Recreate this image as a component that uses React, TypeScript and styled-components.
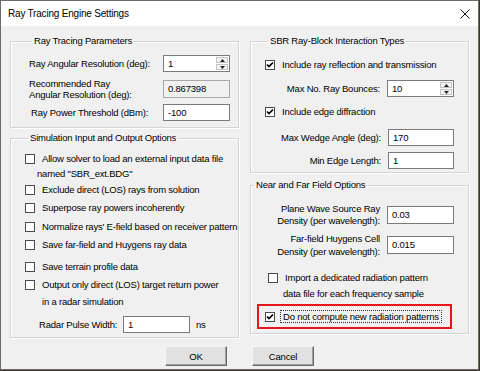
import React from 'react';
import styled, { createGlobalStyle } from 'styled-components';

const GlobalStyle = createGlobalStyle`
  html, body { margin: 0; padding: 0; background: #3c3a2c; }
  * { box-sizing: border-box; }
`;

const Window = styled.div`
  width: 479px;
  height: 370px;
  border: 1px solid #6b6b6b;
  background: #f0f0f0;
  display: flex;
  flex-direction: column;
  font-family: "Liberation Sans", Arial, sans-serif;
  font-size: 9.5px;
  letter-spacing: -0.2px;
  color: #000;
`;

const TitleBar = styled.div`
  height: 25px;
  flex: none;
  background: #fff;
  display: flex;
  align-items: center;
  justify-content: space-between;
  padding: 0 8px 0 7px;
  font-size: 10px;
  letter-spacing: -0.2px;
  color: #000;
`;

const Columns = styled.div`
  display: grid;
  grid-template-columns: 229px 219px;
  column-gap: 11px;
  padding: 9px 0 0 9px;
  align-items: start;
`;

const Column = styled.div<{ $gap: number }>`
  display: flex;
  flex-direction: column;
  gap: ${p => p.$gap}px;
`;

const Group = styled.fieldset<{ $h: number; $pl: number; $pr: number }>`
  margin: 0;
  min-width: 0;
  height: ${p => p.$h}px;
  border: 1px solid #d3d3d3;
  box-shadow: inset 1px 1px 0 #fff, 1px 1px 0 #fff;
  padding: 0 ${p => p.$pr}px 0 ${p => p.$pl}px;
  display: flex;
  flex-direction: column;
`;

const Legend = styled.legend`
  margin-left: 3px;
  padding: 0 2px;
  line-height: 12px;
`;

const FieldRow = styled.div<{ $mt: number; $h?: number; $align?: 'left' | 'right' }>`
  margin-top: ${p => p.$mt}px;
  height: ${p => p.$h ?? 17}px;
  display: flex;
  align-items: center;
  justify-content: ${p => (p.$align === 'left' ? 'space-between' : 'flex-end')};
  gap: 7px;
`;

const FieldLabel = styled.div<{ $indent?: number; $right?: boolean; $lh?: number }>`
  padding-left: ${p => p.$indent ?? 0}px;
  text-align: ${p => (p.$right ? 'right' : 'left')};
  line-height: ${p => p.$lh ?? 12}px;
  white-space: nowrap;
`;

const TextBox = styled.div<{ $w: number; $h?: number; $readonly?: boolean }>`
  flex: none;
  width: ${p => p.$w}px;
  height: ${p => p.$h ?? 17}px;
  border: 1px solid ${p => (p.$readonly ? '#a8a8a8' : '#7a7a7a')};
  background: ${p => (p.$readonly ? '#f0f0f0' : '#fff')};
  display: flex;
  align-items: center;
  justify-content: space-between;
  padding: 0 1px 0 4px;
  line-height: 12px;
`;

const Spinner = styled.div`
  width: 12px;
  height: 13px;
  display: flex;
  flex-direction: column;
  gap: 1px;
`;

const SpinButton = styled.div`
  flex: 1;
  background: #f4f4f4;
  border: 1px solid #c4c4c4;
  display: flex;
  align-items: center;
  justify-content: center;
`;

const CheckRow = styled.div<{ $mt: number; $lh?: number; $pl?: number }>`
  margin-top: ${p => p.$mt}px;
  padding-left: ${p => p.$pl ?? 0}px;
  display: flex;
  align-items: flex-start;
  gap: 7px;
  line-height: ${p => p.$lh ?? 15}px;
`;

const Box = styled.div<{ $lh: number }>`
  flex: none;
  width: 10px;
  height: 10px;
  margin-top: ${p => (p.$lh - 10) / 2}px;
  border: 1px solid #4a4a4a;
  background: #fff;
  display: flex;
  align-items: center;
  justify-content: center;
`;

const CheckText = styled.div`
  display: flex;
  flex-direction: column;
  white-space: nowrap;
`;

const Line = styled.span<{ $shift?: number }>`
  margin-left: ${p => p.$shift ?? 0}px;
`;

const Highlight = styled.div`
  margin: 2px 2px 0 6px;
  height: 25px;
  border: 2px solid #e8141c;
  display: flex;
  align-items: center;
  padding-left: 6px;
  gap: 6px;
`;

const FocusText = styled.span`
  outline: 1px dotted #333;
  padding: 0 2px;
  line-height: 11px;
  white-space: nowrap;
`;

const PulseRow = styled.div`
  margin-top: 6px;
  padding-left: 14px;
  height: 17px;
  display: flex;
  align-items: center;
  white-space: nowrap;
`;

const PulseLabel = styled.span`
  width: 84px;
`;

const Unit = styled.span`
  margin-left: 6px;
`;

const Footer = styled.div`
  margin-top: 8px;
  display: flex;
  justify-content: center;
  gap: 25px;
`;

const Button = styled.div`
  width: 62px;
  height: 20px;
  background: #e1e1e1;
  border: 1px solid;
  border-color: #f6f6f6 #6a6a6a #6a6a6a #f6f6f6;
  box-shadow: inset -1px -1px 0 #a0a0a0;
  display: flex;
  align-items: center;
  justify-content: center;
`;

const CheckMark = () => (
  <svg width="8" height="8" viewBox="0 0 8 8">
    <path d="M1 3.5 L3 5.5 L7 1.5" stroke="#000" strokeWidth="1.7" fill="none" />
  </svg>
);

const Arrow = ({ up }: { up?: boolean }) => (
  <svg width="5" height="3" viewBox="0 0 5 3">
    <path d={up ? 'M0 3 L2.5 0 L5 3 Z' : 'M0 0 L2.5 3 L5 0 Z'} fill="#222" />
  </svg>
);

const SpinBox = () => (
  <Spinner>
    <SpinButton><Arrow up /></SpinButton>
    <SpinButton><Arrow /></SpinButton>
  </Spinner>
);

const Check = ({ checked, lh }: { checked?: boolean; lh: number }) => (
  <Box $lh={lh}>{checked && <CheckMark />}</Box>
);

export default function App() {
  return (
    <>
      <GlobalStyle />
      <Window>
        <TitleBar>
          <span>Ray Tracing Engine Settings</span>
          <svg width="10" height="10" viewBox="0 0 10 10">
            <path d="M0.5 0.5 L9.5 9.5 M9.5 0.5 L0.5 9.5" stroke="#111" strokeWidth="1" />
          </svg>
        </TitleBar>
        <Columns>
          <Column $gap={4}>
            <Group $h={93} $pl={18} $pr={8}>
              <Legend>Ray Tracing Parameters</Legend>
              <FieldRow $mt={8} $align="left">
                <FieldLabel>Ray Angular Resolution (deg):</FieldLabel>
                <TextBox $w={67}>1<SpinBox /></TextBox>
              </FieldRow>
              <FieldRow $mt={6} $h={22} $align="left">
                <FieldLabel $lh={11}>Recommended Ray<br />Angular Resolution (deg):</FieldLabel>
                <TextBox $w={67} $h={18} $readonly>0.867398</TextBox>
              </FieldRow>
              <FieldRow $mt={4} $align="left">
                <FieldLabel $indent={2}>Ray Power Threshold (dBm):</FieldLabel>
                <TextBox $w={67}>-100</TextBox>
              </FieldRow>
            </Group>
            <Group $h={206} $pl={14} $pr={4}>
              <Legend>Simulation Input and Output Options</Legend>
              <CheckRow $mt={7}>
                <Check lh={15} />
                <CheckText>
                  <Line>Allow solver to load an external input data file</Line>
                  <Line $shift={-5}>named "SBR_ext.BDG"</Line>
                </CheckText>
              </CheckRow>
              <CheckRow $mt={1}>
                <Check lh={15} />
                <CheckText>Exclude direct (LOS) rays from solution</CheckText>
              </CheckRow>
              <CheckRow $mt={3}>
                <Check lh={15} />
                <CheckText>Superpose ray powers incoherently</CheckText>
              </CheckRow>
              <CheckRow $mt={4}>
                <Check lh={15} />
                <CheckText>Normalize rays' E-field based on receiver pattern</CheckText>
              </CheckRow>
              <CheckRow $mt={3}>
                <Check lh={15} />
                <CheckText>Save far-field and Huygens ray data</CheckText>
              </CheckRow>
              <CheckRow $mt={7}>
                <Check lh={15} />
                <CheckText>Save terrain profile data</CheckText>
              </CheckRow>
              <CheckRow $mt={2} $lh={17}>
                <Check lh={17} />
                <CheckText>
                  <Line>Output only direct (LOS) target return power</Line>
                  <Line>in a radar simulation</Line>
                </CheckText>
              </CheckRow>
              <PulseRow>
                <PulseLabel>Radar Pulse Width:</PulseLabel>
                <TextBox $w={67}>1</TextBox>
                <Unit>ns</Unit>
              </PulseRow>
            </Group>
          </Column>
          <Column $gap={6}>
            <Group $h={138} $pl={14} $pr={14}>
              <Legend>SBR Ray-Block Interaction Types</Legend>
              <CheckRow $mt={11} $lh={14}>
                <Check checked lh={14} />
                <CheckText>Include ray reflection and transmission</CheckText>
              </CheckRow>
              <FieldRow $mt={8}>
                <FieldLabel>Max No. Ray Bounces:</FieldLabel>
                <TextBox $w={67}>10<SpinBox /></TextBox>
              </FieldRow>
              <CheckRow $mt={8} $lh={14}>
                <Check checked lh={14} />
                <CheckText>Include edge diffraction</CheckText>
              </CheckRow>
              <FieldRow $mt={10}>
                <FieldLabel>Max Wedge Angle (deg):</FieldLabel>
                <TextBox $w={66}>170</TextBox>
              </FieldRow>
              <FieldRow $mt={6}>
                <FieldLabel>Min Edge Length:</FieldLabel>
                <TextBox $w={66}>1</TextBox>
              </FieldRow>
            </Group>
            <Group $h={155} $pl={0} $pr={14}>
              <Legend>Near and Far Field Options</Legend>
              <FieldRow $mt={12} $h={24}>
                <FieldLabel $right>Plane Wave Source Ray<br />Density (per wavelength):</FieldLabel>
                <TextBox $w={67} $h={18}>0.03</TextBox>
              </FieldRow>
              <FieldRow $mt={6} $h={24}>
                <FieldLabel $right $lh={13}>Far-field Huygens Cell<br />Density (per wavelength):</FieldLabel>
                <TextBox $w={67} $h={18}>0.015</TextBox>
              </FieldRow>
              <CheckRow $mt={13} $lh={16} $pl={17}>
                <Check lh={16} />
                <CheckText>
                  <Line>Import a dedicated radiation pattern</Line>
                  <Line $shift={-2}>data file for each frequency sample</Line>
                </CheckText>
              </CheckRow>
              <Highlight>
                <Check checked lh={10} />
                <FocusText>Do not compute new radiation patterns</FocusText>
              </Highlight>
            </Group>
          </Column>
        </Columns>
        <Footer>
          <Button>OK</Button>
          <Button>Cancel</Button>
        </Footer>
      </Window>
    </>
  );
}
